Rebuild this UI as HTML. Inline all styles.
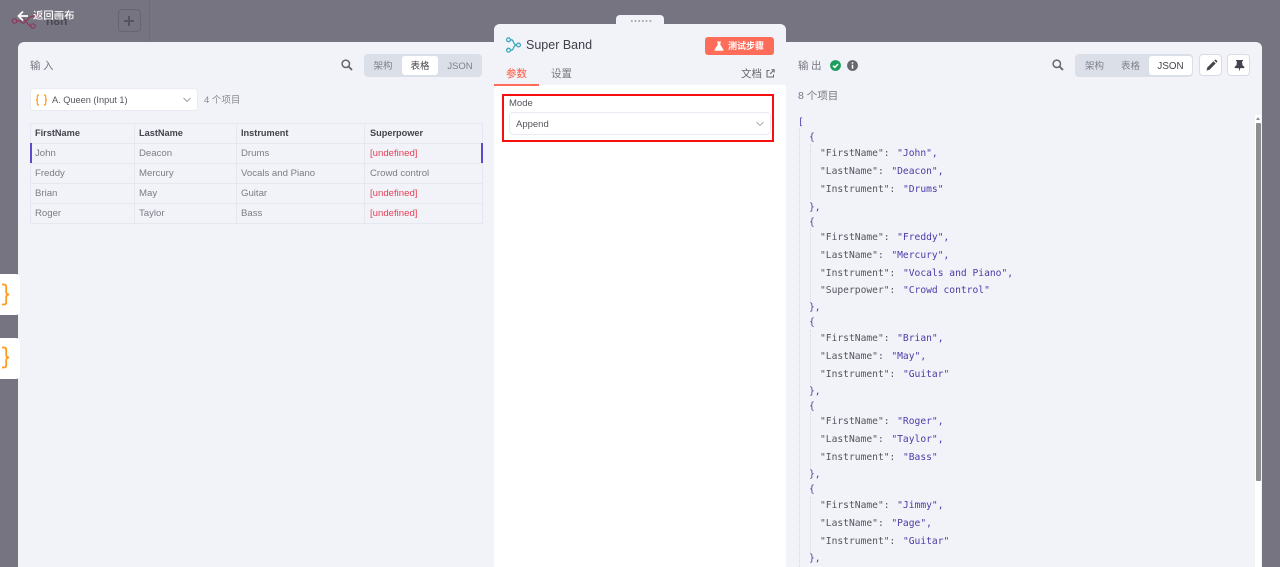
<!DOCTYPE html>
<html lang="zh"><head><meta charset="utf-8"><title>Super Band</title>
<style>
*{box-sizing:border-box}
html,body{margin:0;padding:0}
body{width:1280px;height:567px;overflow:hidden;position:relative;background:#767480;font-family:"Liberation Sans","Noto Sans CJK SC",sans-serif;color:#55555f}
.a{position:absolute;white-space:nowrap}
.panel{position:absolute;background:#f1f3f9}
.seg{position:absolute;height:23px;background:#dbdfe8;border-radius:4px;font-size:9.5px;color:#80808a}
.seg span{position:absolute;top:2px;height:19px;line-height:21px;text-align:center;border-radius:3px}
.seg .on{background:#fff;color:#44444c}
th,td{border:1px solid #e4e8f0;padding:0 0 0 4px;height:20px;font-size:9.6px;font-weight:400;text-align:left;color:#7c7c85;white-space:nowrap;overflow:hidden}
th{font-weight:700;color:#44444c;font-size:9.2px;padding-bottom:1px}
th:last-child,td:last-child{padding-left:5px}
table{border-collapse:collapse;table-layout:fixed;position:absolute;left:30px;top:123px;width:452px}
td.u{color:#ea3e55}
.j{position:absolute;font-family:"DejaVu Sans Mono","Liberation Mono",monospace;font-size:9.65px;line-height:14px;height:14px;white-space:pre;color:#55555f}
.j b{font-weight:400;color:#4b3ca8;margin-left:1.8px}
.ib{position:absolute;top:54px;width:23px;height:22px;background:#fff;border:1px solid #d8dce6;border-radius:4px}
.g{position:absolute;width:1px;border-left:1px dotted #d3dae5}
</style></head><body>

<!-- backdrop header -->
<svg class="a" style="left:10px;top:12px" width="30" height="20" viewBox="0 0 30 20" fill="none" stroke="#8a3a5c" stroke-width="1.2"><circle cx="4.500" cy="9" r="2.200"/><circle cx="13" cy="9" r="2.200"/><circle cx="27" cy="4" r="2.200"/><circle cx="23" cy="14" r="2.200"/><path d="M6.700 9h4.100M15.200 9c3 0 2-5 9.600-5M15.200 9c2 0 2.500 5 5.600 5"/></svg>
<div class="a" style="left:46px;top:14px;font-size:12px;color:#4a4855;font-weight:700">n8n</div>
<div class="a" style="left:118px;top:9px;width:23px;height:23px;border:1px solid #676571;border-radius:4px"></div>
<div class="a" style="left:124px;top:19.500px;width:10px;height:2px;background:#55535f"></div>
<div class="a" style="left:128px;top:15.500px;width:2px;height:10px;background:#55535f"></div>
<div class="a" style="left:149px;top:0;width:1px;height:42px;background:#6d6b77"></div>
<svg class="a" style="left:17px;top:10px" width="12" height="12" viewBox="0 0 12 12" fill="none" stroke="#fff" stroke-width="1.800"><path d="M11 6H2M6 1.500 1.500 6 6 10.500"/></svg>
<div class="a" style="left:33px;top:10px;font-size:10.400px;line-height:14px;color:#fff;font-weight:500">返回画布</div>

<!-- input panel -->
<div class="panel" style="left:18px;top:42px;width:476px;height:525px;border-radius:6px 0 0 0"></div>

<!-- left tabs -->
<div class="a" style="left:0;top:274px;width:20px;height:41px;background:#fff;border-radius:0 4px 4px 0"></div>
<svg class="a" style="left:1px;top:283px" width="11" height="23" viewBox="0 0 11 23" fill="none" stroke="#ff9a1f" stroke-width="1.800"><path d="M1 1.500h2c1.500 0 2.200.8 2.200 2.200v5c0 1.500.8 2.800 3 2.800-2.200 0-3 1.300-3 2.800v5c0 1.400-.7 2.200-2.200 2.200h-2"/></svg>
<div class="a" style="left:0;top:338px;width:20px;height:41px;background:#fff;border-radius:0 4px 4px 0"></div>
<svg class="a" style="left:1px;top:346px" width="11" height="23" viewBox="0 0 11 23" fill="none" stroke="#ff9a1f" stroke-width="1.800"><path d="M1 1.500h2c1.500 0 2.200.8 2.200 2.200v5c0 1.500.8 2.800 3 2.800-2.200 0-3 1.300-3 2.800v5c0 1.400-.7 2.200-2.200 2.200h-2"/></svg>

<div class="a" style="left:30px;top:58px;font-size:10.500px;line-height:16px;color:#777780;letter-spacing:2.500px">输入</div>
<svg class="a" style="left:341px;top:59px" width="12" height="12" viewBox="0 0 12 12" fill="none" stroke="#66666e" stroke-width="1.500"><circle cx="4.800" cy="4.800" r="3.700"/><path d="M7.600 7.600 11 11" stroke-width="1.900"/></svg>
<div class="seg" style="left:364px;top:54px;width:118px">
<span style="left:0;width:38px">架构</span><span class="on" style="left:38px;width:36px">表格</span><span style="left:74px;width:44px">JSON</span></div>
<div class="a" style="left:30px;top:88px;width:168px;height:23px;background:#fff;border:1px solid #e8ebf2;border-radius:4px"></div>
<svg class="a" style="left:36px;top:94px" width="11" height="12" viewBox="0 0 11 12" fill="none" stroke="#ff9a1f" stroke-width="1.200"><path d="M3 1H2.500C1.700 1 1.300 1.500 1.300 2.200V4.600C1.300 5.300 1 5.800.3 6 1 6.200 1.300 6.700 1.300 7.400V9.800C1.300 10.500 1.700 11 2.500 11H3M8 1H8.500C9.300 1 9.700 1.500 9.700 2.200V4.600C9.700 5.300 10 5.800 10.700 6 10 6.200 9.700 6.700 9.700 7.400V9.800C9.700 10.500 9.300 11 8.500 11H8"/></svg>
<div class="a" style="left:52px;top:93px;font-size:9.200px;line-height:14px;color:#55555f">A. Queen (Input 1)</div>
<svg class="a" style="left:183px;top:97px" width="8" height="6" viewBox="0 0 8 6" fill="none" stroke="#9a9aa2" stroke-width=".9"><path d="M.5 1 4 4.500 7.500 1"/></svg>
<div class="a" style="left:204px;top:94px;font-size:9.500px;line-height:14px;color:#8a8a92">4 个项目</div>
<table><colgroup><col style="width:104px"><col style="width:102px"><col style="width:128px"><col style="width:118px"></colgroup>
<tr><th>FirstName</th><th>LastName</th><th>Instrument</th><th>Superpower</th></tr>
<tr><td>John</td><td>Deacon</td><td>Drums</td><td class="u">[undefined]</td></tr>
<tr><td>Freddy</td><td>Mercury</td><td>Vocals and Piano</td><td>Crowd control</td></tr>
<tr><td>Brian</td><td>May</td><td>Guitar</td><td class="u">[undefined]</td></tr>
<tr><td>Roger</td><td>Taylor</td><td>Bass</td><td class="u">[undefined]</td></tr>
</table>
<div class="a" style="left:30px;top:143px;width:1.500px;height:20px;background:#5a4bc8"></div>
<div class="a" style="left:481px;top:143px;width:1.500px;height:20px;background:#5a4bc8"></div>

<!-- output panel -->
<div class="panel" style="left:786px;top:42px;width:476px;height:525px;border-radius:0 6px 0 0"></div>
<div class="a" style="left:798px;top:58px;font-size:10.500px;line-height:16px;color:#777780;letter-spacing:2.500px">输出</div>
<svg class="a" style="left:830px;top:60px" width="11" height="11" viewBox="0 0 11 11"><circle cx="5.500" cy="5.500" r="5.400" fill="#1d9d5c"/><path d="M3 5.600 4.800 7.400 8 4" fill="none" stroke="#fff" stroke-width="1.500"/></svg>
<svg class="a" style="left:847px;top:60px" width="11" height="11" viewBox="0 0 11 11"><circle cx="5.500" cy="5.500" r="5.400" fill="#66666e"/><path d="M5.500 2.200v1.500M5.500 4.800v3.800" stroke="#fff" stroke-width="1.500"/></svg>
<svg class="a" style="left:1052px;top:59px" width="12" height="12" viewBox="0 0 12 12" fill="none" stroke="#66666e" stroke-width="1.500"><circle cx="4.800" cy="4.800" r="3.700"/><path d="M7.600 7.600 11 11" stroke-width="1.900"/></svg>
<div class="seg" style="left:1075px;top:54px;width:118px">
<span style="left:0;width:39px">架构</span><span style="left:38px;width:35px">表格</span><span class="on" style="left:74px;width:43px;font-size:9.800px">JSON</span></div>
<div class="ib" style="left:1199px"><svg style="position:absolute;left:4.500px;top:3.500px" width="13" height="13" viewBox="0 0 13 13"><path d="M1.500 11.500 2.300 8.500 8.500 2.300 10.700 4.500 4.500 10.700ZM9.300 1.500 10 .9c.4-.3.8-.3 1.100 0L12.100 1.900c.3.300.3.700 0 1.100L11.500 3.700Z" fill="#44444c"/></svg></div>
<div class="ib" style="left:1227px"><svg style="position:absolute;left:4.500px;top:3.500px" width="13" height="13" viewBox="0 0 13 13"><path d="M3 1h7v1.300H9l.5 4 1.800 1.500v1.300H7.200L6.500 12.500 5.800 9.100H1.700V7.800L3.500 6.300 4 2.300H3Z" fill="#44444c"/></svg></div>
<div class="a" style="left:798px;top:89px;font-size:10.500px;line-height:15px;color:#777780">8 个项目</div>

<div class="g" style="left:799px;top:128px;height:439px"></div>
<div class="g" style="left:810px;top:144px;height:56px"></div>
<div class="g" style="left:810px;top:229px;height:74px"></div>
<div class="g" style="left:810px;top:330px;height:56px"></div>
<div class="g" style="left:810px;top:413px;height:56px"></div>
<div class="g" style="left:810px;top:497px;height:56px"></div>

<div class="j" style="left:798px;top:116px"><b style="margin:0">[</b></div>
<div class="j" style="left:809px;top:131px"><b style="margin:0">{</b></div>
<div class="j" style="left:820px;top:147px">"FirstName": <b>"John",</b></div>
<div class="j" style="left:820px;top:165px">"LastName": <b>"Deacon",</b></div>
<div class="j" style="left:820px;top:183px">"Instrument": <b>"Drums"</b></div>
<div class="j" style="left:809px;top:201px"><b style="margin:0">},</b></div>
<div class="j" style="left:809px;top:216px"><b style="margin:0">{</b></div>
<div class="j" style="left:820px;top:231px">"FirstName": <b>"Freddy",</b></div>
<div class="j" style="left:820px;top:249px">"LastName": <b>"Mercury",</b></div>
<div class="j" style="left:820px;top:267px">"Instrument": <b>"Vocals and Piano",</b></div>
<div class="j" style="left:820px;top:284px">"Superpower": <b>"Crowd control"</b></div>
<div class="j" style="left:809px;top:301px"><b style="margin:0">},</b></div>
<div class="j" style="left:809px;top:316px"><b style="margin:0">{</b></div>
<div class="j" style="left:820px;top:332px">"FirstName": <b>"Brian",</b></div>
<div class="j" style="left:820px;top:350px">"LastName": <b>"May",</b></div>
<div class="j" style="left:820px;top:368px">"Instrument": <b>"Guitar"</b></div>
<div class="j" style="left:809px;top:385px"><b style="margin:0">},</b></div>
<div class="j" style="left:809px;top:400px"><b style="margin:0">{</b></div>
<div class="j" style="left:820px;top:415px">"FirstName": <b>"Roger",</b></div>
<div class="j" style="left:820px;top:433px">"LastName": <b>"Taylor",</b></div>
<div class="j" style="left:820px;top:451px">"Instrument": <b>"Bass"</b></div>
<div class="j" style="left:809px;top:468px"><b style="margin:0">},</b></div>
<div class="j" style="left:809px;top:483px"><b style="margin:0">{</b></div>
<div class="j" style="left:820px;top:499px">"FirstName": <b>"Jimmy",</b></div>
<div class="j" style="left:820px;top:517px">"LastName": <b>"Page",</b></div>
<div class="j" style="left:820px;top:535px">"Instrument": <b>"Guitar"</b></div>
<div class="j" style="left:809px;top:552px"><b style="margin:0">},</b></div>

<div class="a" style="left:1255px;top:115px;width:6px;height:452px;background:#fff"></div>
<div class="a" style="left:1256px;top:123px;width:4.500px;height:358px;background:#8e8e8e;border-radius:1px"></div>
<div class="a" style="left:1256.200px;top:117px;width:0;height:0;border-left:2px solid transparent;border-right:2px solid transparent;border-bottom:3px solid #8e8e8e"></div>

<!-- centre panel -->
<div class="a" style="left:616px;top:15px;width:48px;height:12px;background:#f1f3f9;border-radius:4px 4px 0 0"></div>
<div class="a" style="left:630px;top:19px;width:22px;height:8px;background-image:radial-gradient(circle,#8f8f98 .7px,transparent 1px);background-size:3.700px 4px"></div>
<div class="a" style="left:494px;top:24px;width:292px;height:543px;background:#fff;border-radius:6px 6px 0 0;overflow:hidden">
<div style="position:absolute;left:0;top:0;width:292px;height:61px;background:#f1f3f9"></div>
</div>
<svg class="a" style="left:505px;top:37px" width="16" height="16" viewBox="0 0 16 16" fill="none" stroke="#3aa7bd" stroke-width="1.300"><circle cx="3.500" cy="2.800" r="1.900"/><circle cx="3.500" cy="13.200" r="1.900"/><circle cx="13.500" cy="8" r="1.900"/><path d="M5.400 2.800H6.500c2.500 0 1.500 5.200 5.100 5.200M5.400 13.200H6.500c2.500 0 1.500-5.200 5.100-5.200"/></svg>
<div class="a" style="left:526px;top:37px;font-size:12.500px;line-height:17px;color:#3f3f48">Super Band</div>
<div class="a" style="left:705px;top:37px;width:69px;height:18px;background:#ff6d5a;border-radius:3px;color:#fff;font-size:9px;line-height:18px;padding-left:23px;font-weight:700">测试步骤</div>
<svg class="a" style="left:714px;top:41px" width="10" height="10" viewBox="0 0 10 10" fill="#fff"><path d="M3 .5h4v1H6.400v2.300L9.400 8.600C9.700 9.200 9.400 9.700 8.700 9.700H1.300C.6 9.700.3 9.200.6 8.600L3.600 3.800V1.500H3Z"/></svg>
<div class="a" style="left:506px;top:66px;font-size:10.500px;line-height:16px;color:#ff6d5a;font-weight:500">参数</div>
<div class="a" style="left:494px;top:84px;width:45px;height:1.500px;background:#ff6d5a"></div>
<div class="a" style="left:551px;top:66px;font-size:10.500px;line-height:16px;color:#777780">设置</div>
<div class="a" style="left:741px;top:66px;font-size:10.500px;line-height:16px;color:#66666e">文档</div>
<svg class="a" style="left:766px;top:69px" width="9" height="9" viewBox="0 0 9 9" fill="none" stroke="#66666e" stroke-width="1"><path d="M7.500 5.500V8H1V1.500H3.500M4 5 8 1M5.500 .8H8.200V3.500"/></svg>
<div class="a" style="left:502px;top:94px;width:272px;height:48px;border:2px solid #f50f0f"></div>
<div class="a" style="left:509px;top:97px;font-size:9.500px;line-height:14px;color:#55555f">Mode</div>
<div class="a" style="left:509px;top:112px;width:262px;height:23px;background:#fff;border:1px solid #e8ebf2;border-radius:4px"></div>
<div class="a" style="left:516px;top:118px;font-size:9.500px;line-height:14px;color:#55555f">Append</div>
<svg class="a" style="left:756px;top:121px" width="8" height="6" viewBox="0 0 8 6" fill="none" stroke="#a5a5ad" stroke-width=".9"><path d="M.5 1 4 4.500 7.500 1"/></svg>
</body></html>
